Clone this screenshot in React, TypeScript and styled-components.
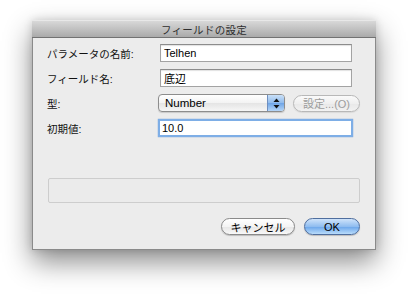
import styled, { createGlobalStyle } from "styled-components";

const GlobalStyle = createGlobalStyle`
  html, body {
    margin: 0;
    padding: 0;
    background: #ffffff;
  }
  body {
    font-family: "Liberation Sans", "Noto Sans CJK JP", sans-serif;
  }
`;

const Page = styled.div`
  width: 408px;
  height: 294px;
  padding-top: 20px;
  box-sizing: border-box;
  display: flex;
  justify-content: center;
  align-items: flex-start;
`;

const Sheet = styled.div`
  width: 344px;
  height: 230px;
  box-sizing: border-box;
  background: #ececec;
  border: 1px solid #8a8a8a;
  border-top: none;
  box-shadow: 0 12px 26px rgba(0, 0, 0, 0.45), 0 0 8px rgba(0, 0, 0, 0.15);
  display: flex;
  flex-direction: column;
`;

const TitleBar = styled.div`
  height: 16px;
  flex: none;
  background: linear-gradient(#d8d8d8, #aaaaaa);
  border-bottom: 1px solid #727272;
  border-top: 1px solid #e8e8e8;
  margin: 0 -1px;
  display: flex;
  align-items: center;
  justify-content: center;
  font-size: 10.5px;
  letter-spacing: 0.3px;
  color: #2e2e2e;
`;

const Body = styled.div`
  flex: 1;
  padding: 6px 15px 15px 14px;
  display: flex;
  flex-direction: column;
`;

const Form = styled.div`
  display: grid;
  grid-template-columns: 113px 1fr;
  row-gap: 7px;
  align-items: center;
`;

const Label = styled.div`
  font-size: 10.5px;
  color: #111;
`;

const TextField = styled.div<{ $focused?: boolean }>`
  width: 192px;
  height: 18px;
  box-sizing: border-box;
  background: #fff;
  border: 1px solid #a3a3a3;
  border-top-color: #8c8c8c;
  box-shadow: inset 0 1px 1px rgba(0, 0, 0, 0.12);
  padding: 0 3px;
  display: flex;
  align-items: center;
  font-size: 11px;
  color: #000;
  ${(p) =>
    p.$focused &&
    `
    width: 195px;
    margin-left: -2px;
    border: 2px solid #7eaee6;
    box-shadow: 0 0 1px #5a8fd4;
    padding: 0 2px;
  `}
`;

const FieldRow = styled.div`
  display: flex;
  align-items: center;
  gap: 8px;
  margin-left: -2px;
`;

const Popup = styled.div`
  width: 127px;
  height: 18px;
  box-sizing: border-box;
  border: 1px solid #8d8d8d;
  border-radius: 4px;
  background: linear-gradient(#ffffff, #f3f3f3 50%, #e4e4e4 51%, #f6f6f6);
  box-shadow: 0 1px 1px rgba(0, 0, 0, 0.15);
  display: flex;
  overflow: hidden;
`;

const PopupText = styled.div`
  flex: 1;
  padding-left: 6px;
  display: flex;
  align-items: center;
  font-size: 11.5px;
  color: #000;
`;

const PopupArrows = styled.div`
  width: 16px;
  border-left: 1px solid #6f8fbf;
  background: linear-gradient(#c9e0f8, #8fbaec 50%, #6ea4e6 51%, #b6d6f7);
  display: flex;
  align-items: center;
  justify-content: center;
`;

const PillButton = styled.div<{ $width: number; $primary?: boolean; $disabled?: boolean }>`
  width: ${(p) => p.$width}px;
  height: 17px;
  box-sizing: border-box;
  border-radius: 9px;
  border: 1px solid ${(p) => (p.$primary ? "#4f6e9e" : p.$disabled ? "#b8b8b8" : "#8a8a8a")};
  background: ${(p) =>
    p.$primary
      ? "linear-gradient(#cfe3fa, #90bdf0 50%, #6aa5ea 51%, #b9dcfb)"
      : p.$disabled
      ? "linear-gradient(#fafafa, #efefef 50%, #e8e8e8 51%, #f2f2f2)"
      : "linear-gradient(#ffffff, #f4f4f4 50%, #e6e6e6 51%, #f8f8f8)"};
  box-shadow: 0 1px 1px rgba(0, 0, 0, ${(p) => (p.$disabled ? 0.08 : 0.2)});
  display: flex;
  align-items: center;
  justify-content: center;
  font-size: 11px;
  color: ${(p) => (p.$disabled ? "#9c9c9c" : "#000")};
`;

const MessageBox = styled.div`
  margin-top: 41px;
  margin-left: 1px;
  height: 25px;
  box-sizing: border-box;
  border: 1px solid #cdcdcd;
  border-radius: 2px;
  background: #ebebeb;
`;

const Buttons = styled.div`
  margin-top: 15px;
  display: flex;
  justify-content: flex-end;
  gap: 9px;
`;

function App() {
  return (
    <>
      <GlobalStyle />
      <Page>
        <Sheet>
          <TitleBar>フィールドの設定</TitleBar>
          <Body>
            <Form>
              <Label>パラメータの名前:</Label>
              <TextField>Telhen</TextField>
              <Label>フィールド名:</Label>
              <TextField>底辺</TextField>
              <Label>型:</Label>
              <FieldRow>
                <Popup>
                  <PopupText>Number</PopupText>
                  <PopupArrows>
                    <svg width="7" height="11" viewBox="0 0 7 11">
                      <path d="M3.5 0.5 L6.5 4 L0.5 4 Z" fill="#111" />
                      <path d="M3.5 10.5 L6.5 7 L0.5 7 Z" fill="#111" />
                    </svg>
                  </PopupArrows>
                </Popup>
                <PillButton $width={67} $disabled>
                  設定...(O)
                </PillButton>
              </FieldRow>
              <Label>初期値:</Label>
              <TextField $focused>10.0</TextField>
            </Form>
            <MessageBox />
            <Buttons>
              <PillButton $width={74}>キャンセル</PillButton>
              <PillButton $width={56} $primary>
                OK
              </PillButton>
            </Buttons>
          </Body>
        </Sheet>
      </Page>
    </>
  );
}

export default App;
